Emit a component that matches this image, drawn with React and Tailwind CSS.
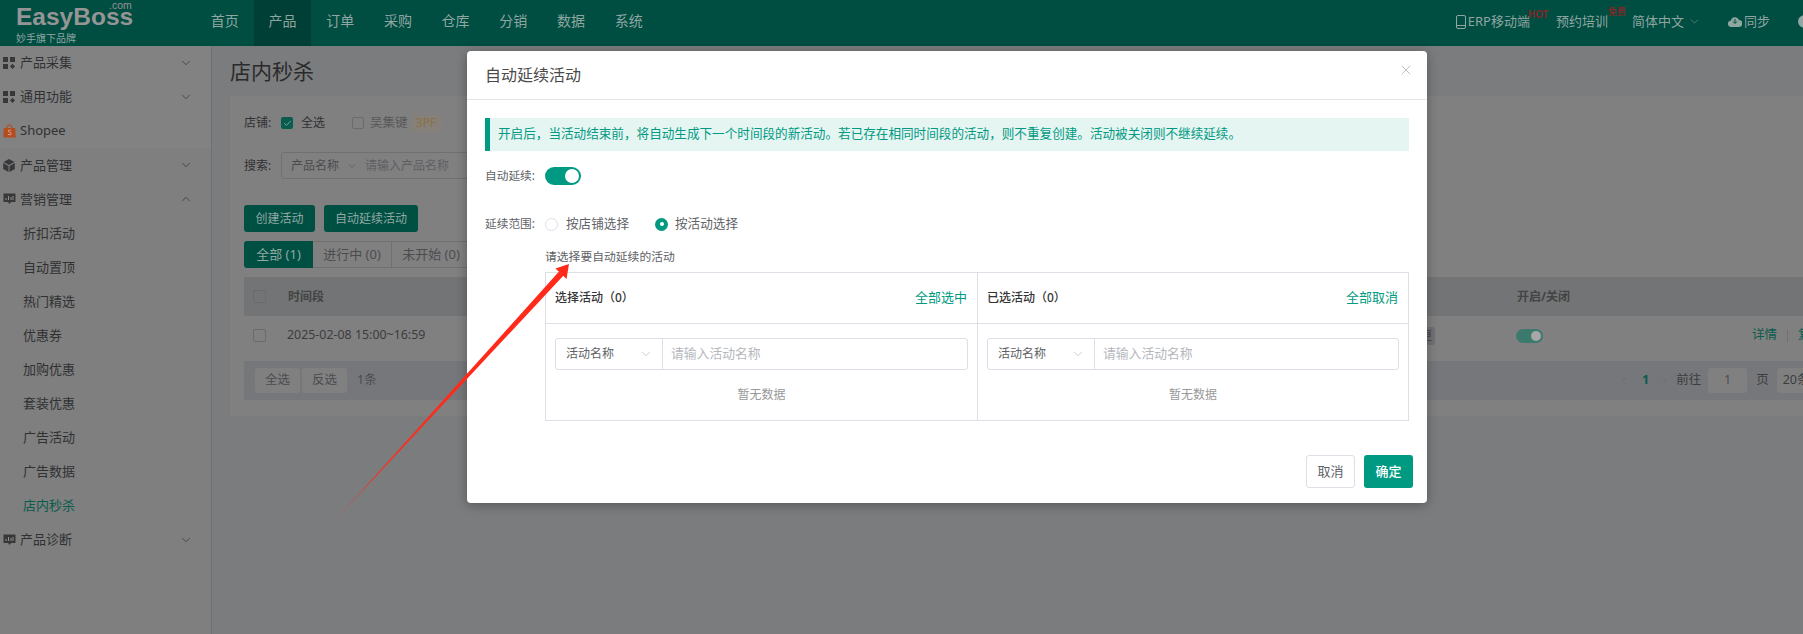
import React from "react";
import { ChevronDown, ChevronUp, ChevronLeft, ChevronRight, X, Check } from "lucide-react";

const FONT = "font-['Noto_Sans','Noto_Sans_CJK_SC',sans-serif]";

function Grid() {
  return (
    <svg width="12" height="12" viewBox="0 0 12 12" fill="#38383a" className="shrink-0">
      <rect x="0" y="0" width="5" height="5" />
      <rect x="7" y="0" width="5" height="5" />
      <rect x="0" y="7" width="5" height="5" />
      <path d="M9.5 6.8 12 9.5 9.5 12 7 9.5Z" />
    </svg>
  );
}
function Bag() {
  return (
    <svg width="13" height="14" viewBox="0 0 13 14" className="shrink-0">
      <path d="M.8 4h11.4l.6 9.6H.2Z" fill="#b54c20" />
      <path d="M4 4c0-4 5-4 5 0" fill="none" stroke="#b54c20" strokeWidth="1.1" />
      <path d="M8.2 6.4c-1-.7-3-.6-3 .7 0 1.5 3.2.9 3.2 2.6 0 1.3-2.3 1.4-3.5.6" fill="none" stroke="#d9b8a4" strokeWidth=".8" />
    </svg>
  );
}
function Cube() {
  return (
    <svg width="12" height="13" viewBox="0 0 12 13" fill="#38383a" className="shrink-0">
      <path d="M6 0 11.5 3 6 6 .5 3Z" />
      <path d="M.2 4 5.5 7v6L.2 10Z" />
      <path d="M11.8 4 6.5 7v6l5.3-3Z" />
    </svg>
  );
}
function Chat() {
  return (
    <svg width="13" height="12" viewBox="0 0 13 12" className="shrink-0">
      <path d="M.5.5h12v8.5H8l-1.5 2-1.5-2H.5Z" fill="#38383a" />
      <path d="M3 7V5M5.5 7V3M8 7V4M10 7V3" stroke="#9a9a9a" strokeWidth=".9" />
    </svg>
  );
}

function MenuRow({ icon, label, open, chevron = true, light }) {
  return (
    <div className={`flex h-[34.08px] items-center pl-[3px] pr-[18px] text-[13px] text-[#303133] ${light ? "bg-[#828283]" : ""}`}>
      <span className="flex w-[17px] items-center">{icon}</span>
      <span>{label}</span>
      {chevron &&
        (open ? (
          <ChevronUp size={14} strokeWidth={1.2} className="ml-auto text-[#303030]" />
        ) : (
          <ChevronDown size={14} strokeWidth={1.2} className="ml-auto text-[#303030]" />
        ))}
    </div>
  );
}
function SubRow({ label, active }) {
  return (
    <div className={`flex h-[34.08px] items-center pl-[23px] text-[13px] ${active ? "text-[#0a5c4e]" : "text-[#303133]"}`}>
      {label}
    </div>
  );
}

function Box({ className = "" }) {
  return <span className={`block h-[13px] w-[13px] shrink-0 rounded-[2px] border border-[#6a6b6d] ${className}`} />;
}

function PanelColumn({ title, action, divider, pad }) {
  return (
    <div className={`flex min-w-0 flex-col ${divider ? "w-[432px] border-r border-[#dcdfe6]" : "flex-1"}`}>
      <div className="flex h-[51px] shrink-0 items-center justify-between border-b border-[#dcdfe6] pl-[9px] pr-[10px]">
        <span className="text-[12px] font-medium text-[#333]">{title}</span>
        <span className="text-[13px] text-[#009a82]">{action}</span>
      </div>
      <div className={`flex flex-1 flex-col pt-[14px] pl-[9px] ${pad}`}>
        <div className="flex h-[32px] rounded-[3px] border border-[#dcdfe6] bg-white">
          <div className="flex w-[107px] shrink-0 items-center justify-between border-r border-[#dcdfe6] pl-[10px] pr-[9px] text-[12px] text-[#606266]">
            活动名称
            <ChevronDown size={14} strokeWidth={1} className="text-[#a8abb2]" />
          </div>
          <div className="flex items-center pl-[8px] text-[12.8px] text-[#b4b7bd]">请输入活动名称</div>
        </div>
        <div className="mt-[16px] text-center text-[12px] text-[#999]">暂无数据</div>
      </div>
    </div>
  );
}

function Modal() {
  return (
    <div className="absolute left-[467px] top-[51px] h-[452px] w-[960px] rounded-[4px] bg-white text-[#606266] shadow-[0_2px_12px_rgba(0,0,0,0.3)]">
      <div className="flex h-[49px] items-center justify-between border-b border-[#e4e4e4] pl-[18px] pr-[13px]">
        <span className="text-[16px] text-[#4a4a4a]">自动延续活动</span>
        <X size={16} strokeWidth={0.9} className="-mt-[10px] text-[#909399]" />
      </div>
      <div className="pl-[18px] pr-[18px]">
        <div className="mt-[18px] flex h-[33px] items-center border-l-[5px] border-[#009a82] bg-[#e5f5f2] pl-[8px] text-[12.6px] text-[#009a82]">
          开启后，当活动结束前，将自动生成下一个时间段的新活动。若已存在相同时间段的活动，则不重复创建。活动被关闭则不继续延续。
        </div>
        <div className="mt-[16px] flex items-center">
          <span className="w-[60px] text-[11.7px] text-[#606266]">自动延续:</span>
          <span className="flex h-[18px] w-[36px] items-center justify-end rounded-full bg-[#009a82] pr-[2px]">
            <span className="h-[14px] w-[14px] rounded-full bg-white" />
          </span>
        </div>
        <div className="mt-[30px] flex h-[18px] items-center text-[12.6px]">
          <span className="w-[60px] text-[11.7px] text-[#606266]">延续范围:</span>
          <span className="h-[13px] w-[13px] rounded-full border border-[#dcdfe6]" />
          <span className="ml-[8px] w-[76px] text-[#606266]">按店铺选择</span>
          <span className="ml-[13px] flex h-[13px] w-[13px] items-center justify-center rounded-full bg-[#009a82]">
            <span className="h-[4px] w-[4px] rounded-full bg-white" />
          </span>
          <span className="ml-[7px] text-[#606266]">按活动选择</span>
        </div>
        <div className="mt-[15px] pl-[60px] text-[11.8px] leading-[16px] text-[#606266]">请选择要自动延续的活动</div>
        <div className="ml-[60px] mt-[8px] flex h-[149px] border border-[#dcdfe6]">
          <PanelColumn title="选择活动（0）" action="全部选中" divider pad="pr-[9px]" />
          <PanelColumn title="已选活动（0）" action="全部取消" pad="pr-[9px]" />
        </div>
      </div>
      <div className="mt-[34px] flex justify-end gap-[9px] pr-[14px] text-[13px]">
        <button className="h-[33px] w-[49px] rounded-[3px] border border-[#dcdfe6] bg-white text-[#606266]">取消</button>
        <button className="h-[33px] w-[49px] rounded-[3px] bg-[#009a82] font-medium text-white">确定</button>
      </div>
    </div>
  );
}

function Arrow() {
  return (
    <svg className="pointer-events-none absolute left-0 top-0" width="1803" height="634" viewBox="0 0 1803 634">
      <defs>
        <linearGradient id="a" x1="328" y1="528" x2="450" y2="392" gradientUnits="userSpaceOnUse">
          <stop offset="0" stopColor="#ff2a1a" stopOpacity="0.1" />
          <stop offset=".4" stopColor="#ff2a1a" stopOpacity=".8" />
          <stop offset="1" stopColor="#ff2a1a" />
        </linearGradient>
      </defs>
      <path d="M328 528 559 271.500 563.500 275.500Z" fill="url(#a)" />
      <path d="M569 264 555.500 268.500 566.500 279Z" fill="#ff2a1a" />
    </svg>
  );
}

export default function App() {
  return (
    <div className={`relative h-[634px] w-[1803px] overflow-hidden bg-[#7b7c7e] ${FONT}`}>
      <header className="flex h-[46px] items-center bg-[#004d41] text-[13px] text-[#8fa6a1]">
        <div className="w-[196px] shrink-0 pl-[16px]">
          <div className="relative h-[30px] font-['Liberation_Sans',sans-serif] text-[24.5px] font-bold leading-[29px] text-[#959595]">
            EasyBoss
            <span className="absolute left-[93px] -top-[2px] text-[10.500px] font-normal leading-[11px]">.com</span>
          </div>
          <div className="text-[10px] leading-[12px] text-[#8fa6a1]">妙手旗下品牌</div>
        </div>
        <nav className="flex h-full text-[14px]">
          {["首页", "产品", "订单", "采购", "仓库", "分销", "数据", "系统"].map((n) => (
            <div key={n} className={`flex h-full w-[57.7px] items-center justify-center pb-[5px] ${n === "产品" ? "bg-[#003f35]" : ""}`}>
              {n}
            </div>
          ))}
        </nav>
        <div className="ml-auto -mr-[8px] flex items-center whitespace-nowrap pb-[3px]">
          <svg width="10" height="14" viewBox="0 0 10 14" fill="none" stroke="#8fa6a1" className="mr-[2px]">
            <rect x=".5" y=".5" width="9" height="13" rx="1.5" />
            <path d="M.5 10.500h9" />
          </svg>
          <span className="relative">
            ERP移动端
            <span className="absolute -right-[18px] -top-[5px] text-[10px] font-bold tracking-[-0.3px] text-[#7c2a2a]">HOT</span>
          </span>
          <span className="relative ml-[26px]">
            预约培训
            <span className="absolute -right-[18px] -top-[7px] text-[9px] font-bold text-[#7c2a2a]">免费</span>
          </span>
          <span className="ml-[24px]">简体中文</span>
          <ChevronDown size={13} strokeWidth={1} className="ml-[4px]" />
          <svg width="14" height="11" viewBox="0 0 14 11" className="ml-[27px]" fill="#8fa6a1">
            <path d="M3.500 11A3.300 3.300 0 0 1 3 4.400 4.200 4.200 0 0 1 11 4a3.500 3.500 0 0 1-.3 7Z" />
            <path d="M7 3v4M5 5.500l2 2 2-2" stroke="#004d41" strokeWidth="1" fill="none" />
          </svg>
          <span className="ml-[2px]">同步</span>
          <span className="ml-[28px] h-[13px] w-[13px] rounded-full bg-[#8fa6a1]" />
        </div>
      </header>

      <div className="flex h-[588px]">
        <aside className="w-[212px] shrink-0 border-r border-[#6f7072] bg-[#7f7f7f]">
          <MenuRow light icon={<Grid />} label="产品采集" />
          <MenuRow light icon={<Grid />} label="通用功能" />
          <MenuRow light icon={<Bag />} label="Shopee" chevron={false} />
          <MenuRow icon={<Cube />} label="产品管理" />
          <MenuRow icon={<Chat />} label="营销管理" open />
          {["折扣活动", "自动置顶", "热门精选", "优惠券", "加购优惠", "套装优惠", "广告活动", "广告数据"].map((s) => (
            <SubRow key={s} label={s} />
          ))}
          <SubRow label="店内秒杀" active />
          <MenuRow icon={<Chat />} label="产品诊断" />
        </aside>

        <main className="min-w-0 flex-1 pl-[18px] text-[#303133]">
          <h1 className="h-[50px] pt-[10px] text-[21px] font-normal leading-[30px] text-[#2a2a2a]">店内秒杀</h1>
          <section className="h-[320px] w-[1600px] whitespace-nowrap bg-[#808081] pl-[14px] pt-[14px] text-[13px]">
            <div className="flex h-[26px] items-center text-[12px]">
              <span className="w-[37px]">店铺:</span>
              <span className="flex h-[12px] w-[12px] items-center justify-center rounded-[2px] bg-[#0a5c4e]">
                <Check size={9} strokeWidth={2} className="text-[#9fb5b0]" />
              </span>
              <span className="ml-[8px] text-[12px]">全选</span>
              <span className="ml-[27px] h-[12px] w-[12px] rounded-[2px] border border-[#6a6b6d]" />
              <span className="ml-[6px] text-[12.500px] text-[#585858]">吴集键</span>
              <span className="ml-[3px] flex h-[17px] w-[31px] items-center justify-center rounded-[2px] bg-[#85817a] text-[12px] text-[#8f7040]">3PF</span>
            </div>
            <div className="mt-[16px] flex h-[27px] items-center text-[12px]">
              <span className="w-[37px] text-[12px]">搜索:</span>
              <div className="flex h-[27px] w-[300px] items-center rounded-[3px] border border-[#6f7072] pl-[9px] text-[#4c4c4e]">
                产品名称
                <ChevronDown size={12} strokeWidth={1} className="ml-[7px]" />
                <span className="ml-[7px] text-[#5f5f61]">请输入产品名称</span>
              </div>
            </div>
            <div className="mt-[26px] flex gap-[9px] text-[12px]">
              <button className="h-[27px] w-[71px] rounded-[3px] bg-[#004f43] text-[#91a8a2]">创建活动</button>
              <button className="h-[27px] w-[94px] rounded-[3px] bg-[#004f43] text-[#91a8a2]">自动延续活动</button>
            </div>
            <div className="mt-[9px] flex h-[27px] items-center">
              <span className="flex h-full w-[69px] items-center justify-center rounded-l-[3px] bg-[#004f43] text-[#91a8a2]">全部 (1)</span>
              <span className="flex h-full w-[79px] items-center justify-center border-y border-r border-[#6f7072] text-[#4c4c4e]">进行中 (0)</span>
              <span className="flex h-full w-[79px] items-center justify-center border-y border-r border-[#6f7072] text-[#4c4c4e]">未开始 (0)</span>
            </div>
            <div className="mt-[9px] flex h-[39px] items-center bg-[#737476] pl-[9px] text-[12px] font-bold text-[#444]">
              <Box className="w-[12px]" />
              <span className="ml-[22px] w-[1229px] shrink-0">时间段</span>
              <span>开启/关闭</span>
            </div>
            <div className="flex h-[39px] items-center pl-[9px] text-[#3c3c3e]">
              <Box />
              <span className="ml-[21px] w-[1108px] shrink-0 text-[12.4px]">2025-02-08 15:00~16:59</span>
              <span className="flex h-[18px] w-[40px] shrink-0 items-center justify-end rounded-[3px] bg-[#707173] pr-[3px] text-[12px] text-[#454546]">变更</span>
              <span className="ml-[81px] flex h-[14px] w-[27px] shrink-0 items-center justify-end rounded-full bg-[#3d7a6e] pr-[2px]">
                <span className="h-[10px] w-[10px] rounded-full bg-[#a8a8a8]" />
              </span>
              <span className="ml-[209px] text-[12.500px] text-[#0a5c4e]">详情</span>
              <span className="ml-[10px] h-[12px] w-px bg-[#6f7072]" />
              <span className="ml-[10px] text-[12.500px] text-[#0a5c4e]">复制</span>
            </div>
            <div className="mt-[6px] flex h-[39px] items-center bg-[#76777a] pl-[11px] text-[12.500px]">
              <span className="flex h-[25px] w-[45px] shrink-0 items-center justify-center rounded-[3px] bg-[#808081] text-[#4c4c4e]">全选</span>
              <span className="ml-[2px] flex h-[25px] w-[45px] shrink-0 items-center justify-center rounded-[3px] bg-[#808081] text-[#4c4c4e]">反选</span>
              <span className="ml-[10px] w-[20px] shrink-0 text-[#4c4c4e]">1条</span>
              <ChevronLeft size={12} strokeWidth={1} className="ml-[1241px] shrink-0 text-[#636466]" />
              <span className="ml-[12px] shrink-0 font-bold text-[#0a5c4e]">1</span>
              <ChevronRight size={12} strokeWidth={1} className="ml-[10px] shrink-0 text-[#636466]" />
              <span className="ml-[5px] shrink-0 text-[#3c3c3e]">前往</span>
              <span className="ml-[7px] flex h-[25px] w-[39px] shrink-0 items-center justify-center rounded-[3px] bg-[#808081] text-[#4c4c4e]">1</span>
              <span className="ml-[9px] shrink-0 text-[#3c3c3e]">页</span>
              <span className="ml-[8px] flex h-[25px] w-[70px] shrink-0 items-center rounded-[3px] bg-[#808081] pl-[6px] text-[#3c3c3e]">20条/页</span>
            </div>
          </section>
        </main>
      </div>

      <Modal />
      <Arrow />
    </div>
  );
}
